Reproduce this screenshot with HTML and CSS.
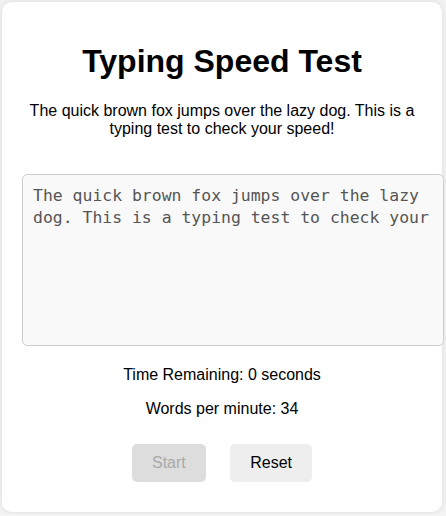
FILE: index.html
```html
<!DOCTYPE html>
<html lang="en">
<head>
<meta charset="utf-8">
<title>Typing Speed Test</title>
<link rel="stylesheet" href="styles.css">
</head>
<body>
<div class="card">
  <h1 class="title">Typing Speed Test</h1>
  <p class="prompt">The quick brown fox jumps over the lazy dog. This is a typing test to check your speed!</p>
  <textarea class="input">The quick brown fox jumps over the lazy dog. This is a typing test to check your</textarea>
  <p class="stat">Time Remaining: 0 seconds</p>
  <p class="stat">Words per minute: 34</p>
  <div class="actions">
    <button class="btn btn-start" disabled>Start</button>
    <button class="btn btn-reset">Reset</button>
  </div>
</div>
</body>
</html>
```
FILE: styles.css
```css
html, body {
  margin: 0;
  padding: 0;
}
body {
  background: #f4f4f4;
  font-family: "Liberation Sans", Arial, sans-serif;
  color: #000;
  padding: 2px;
}
.card {
  width: 400px;
  padding: 20px;
  background: #fff;
  border-radius: 10px;
  box-shadow: 0 0 8px rgba(0, 0, 0, 0.1);
  text-align: center;
}
.title {
  font-size: 32px;
  font-weight: bold;
  margin: 21.44px 0;
}
.prompt {
  font-size: 16px;
  margin: 16px 0;
}
.input {
  display: block;
  width: 100%;
  height: 150px;
  margin: 36px 0 20px;
  padding: 10px;
  border: 1px solid #ccc;
  border-radius: 5px;
  background: #f9f9f9;
  color: #555;
  font-family: "DejaVu Sans Mono", monospace;
  font-size: 16.45px;
  line-height: 22px;
  resize: none;
  text-align: left;
}
.stat {
  font-size: 16px;
  margin: 16px 0;
}
.actions {
  margin-top: 16px;
}
.btn {
  font-family: "Liberation Sans", Arial, sans-serif;
  font-size: 16px;
  padding: 10px 20px;
  margin: 10px;
  border: none;
  border-radius: 5px;
  background: #eee;
  color: #000;
}
.btn-start {
  background: #ddd;
  color: #aaa;
}
```
